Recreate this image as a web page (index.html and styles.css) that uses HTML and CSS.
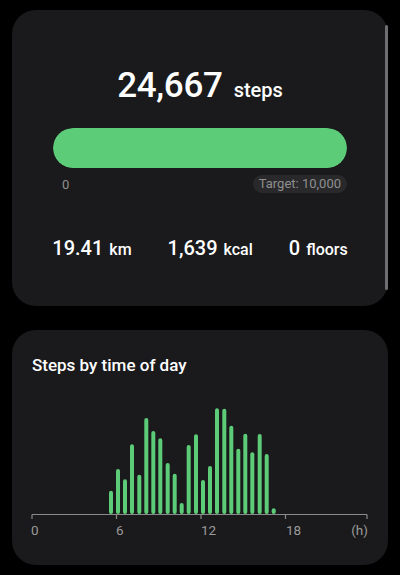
FILE: index.html
```html
<!DOCTYPE html>
<html lang="en">
<head>
<meta charset="utf-8">
<link rel="stylesheet" href="styles.css">
</head>
<body>
<div class="screen">
  <section class="card card-steps">
    <div class="total">
      <span class="total-num">24,667</span>
      <span class="total-unit">steps</span>
    </div>
    <div class="progress"><div class="progress-fill"></div></div>
    <div class="progress-labels">
      <span class="zero">0</span>
      <span class="target">Target: 10,000</span>
    </div>
    <div class="stats">
      <div class="stat"><span class="stat-num">19.41</span><span class="stat-unit">km</span></div>
      <div class="divider"></div>
      <div class="stat"><span class="stat-num">1,639</span><span class="stat-unit">kcal</span></div>
      <div class="divider"></div>
      <div class="stat"><span class="stat-num">0</span><span class="stat-unit">floors</span></div>
    </div>
    <div class="scrollbar"></div>
  </section>

  <section class="card card-chart">
    <h2 class="chart-title">Steps by time of day</h2>
    <svg class="chart" width="376" height="160" viewBox="0 0 376 160">
      <g class="bars" fill="#5dcc78">
        <rect x="97" y="100.7" width="4" height="23.3" rx="2"/>
        <rect x="104" y="79" width="4" height="45" rx="2"/>
        <rect x="111" y="89.3" width="4" height="34.7" rx="2"/>
        <rect x="118" y="54.3" width="4" height="69.7" rx="2"/>
        <rect x="125.3" y="84.7" width="4" height="39.3" rx="2"/>
        <rect x="132.3" y="28" width="4" height="96" rx="2"/>
        <rect x="139.3" y="41" width="4" height="83" rx="2"/>
        <rect x="146.3" y="48.3" width="4" height="75.7" rx="2"/>
        <rect x="153.7" y="73" width="4" height="51" rx="2"/>
        <rect x="160.7" y="83.7" width="4" height="40.3" rx="2"/>
        <rect x="167.7" y="113" width="4" height="11" rx="2"/>
        <rect x="174.7" y="55" width="4" height="69" rx="2"/>
        <rect x="182" y="44.3" width="4" height="79.7" rx="2"/>
        <rect x="189" y="90" width="4" height="34" rx="2"/>
        <rect x="196" y="76" width="4" height="48" rx="2"/>
        <rect x="203" y="18.3" width="4" height="105.7" rx="2"/>
        <rect x="210.3" y="18.7" width="4" height="105.3" rx="2"/>
        <rect x="217.3" y="35.7" width="4" height="88.3" rx="2"/>
        <rect x="224.3" y="58.7" width="4" height="65.3" rx="2"/>
        <rect x="231.3" y="43.7" width="4" height="80.3" rx="2"/>
        <rect x="238.3" y="62.3" width="4" height="61.7" rx="2"/>
        <rect x="245.7" y="44" width="4" height="80" rx="2"/>
        <rect x="252.7" y="64" width="4" height="60" rx="2"/>
        <rect x="259.7" y="118.3" width="4" height="5.7" rx="2"/>
      </g>
      <g class="axis" stroke="#8a8a8a" stroke-width="1.2" fill="none">
        <line x1="20" y1="124.5" x2="355" y2="124.5"/>
        <line x1="20" y1="124.5" x2="20" y2="129"/>
        <line x1="104.5" y1="124.5" x2="104.5" y2="129"/>
        <line x1="189" y1="124.5" x2="189" y2="129"/>
        <line x1="273.5" y1="124.5" x2="273.5" y2="129"/>
        <line x1="355" y1="124.5" x2="355" y2="129"/>
      </g>
      <g class="ticks">
        <text x="19" y="145">0</text>
        <text x="104" y="145">6</text>
        <text x="189" y="145">12</text>
        <text x="274" y="145">18</text>
        <text x="356" y="145" text-anchor="end">(h)</text>
      </g>
    </svg>
  </section>
</div>
</body>
</html>
```

FILE: styles.css
```css
* { box-sizing: border-box; }
html, body {
  margin: 0;
  padding: 0;
  background: #000;
}
body {
  font-family: Roboto, "Noto Sans", sans-serif;
  color: #fff;
}
.screen {
  width: 400px;
  height: 575px;
  padding: 10px 12px;
  display: flex;
  flex-direction: column;
  gap: 24px;
  overflow: hidden;
}
.card {
  background: #1a1a1c;
  border-radius: 24px;
  position: relative;
}
.card-steps {
  height: 296px;
  padding: 54px 41px 0;
}
.total {
  display: flex;
  justify-content: center;
  align-items: baseline;
  gap: 11px;
  height: 44px;
}
.total-num {
  font-size: 35px;
  line-height: 44px;
  font-weight: 500;
  letter-spacing: -0.3px;
}
.total-unit {
  font-size: 20px;
  line-height: 24px;
  font-weight: 500;
}
.progress {
  margin-top: 20px;
  height: 40px;
  border-radius: 20px;
  background: #2c2c2e;
  overflow: hidden;
}
.progress-fill {
  width: 100%;
  height: 100%;
  background: #5dcc78;
  border-radius: 20px;
}
.progress-labels {
  margin-top: 7px;
  display: flex;
  justify-content: space-between;
  align-items: center;
  height: 18px;
  font-size: 13px;
  color: #8f8f8f;
}
.zero {
  padding-left: 9px;
}
.target {
  background: #29292b;
  border-radius: 9px;
  padding: 0 6px;
  line-height: 18px;
}
.stats {
  margin-top: 43px;
  display: flex;
  justify-content: center;
  align-items: center;
  gap: 18px;
  height: 24px;
}
.stat {
  display: flex;
  align-items: baseline;
  gap: 6px;
}
.stat-num {
  font-size: 20px;
  line-height: 24px;
  font-weight: 500;
}
.stat-unit {
  font-size: 16px;
  line-height: 20px;
  font-weight: 500;
}
.divider {
  width: 1px;
  height: 16px;
  background: #48484a;
}
.scrollbar {
  position: absolute;
  right: 0;
  top: 15px;
  width: 3px;
  height: 265px;
  border-radius: 2px;
  background: #6e6e70;
}
.card-chart {
  height: 235px;
  padding: 25px 20px 0;
}
.chart-title {
  margin: 0;
  font-size: 17px;
  line-height: 20px;
  font-weight: 500;
}
.chart {
  display: block;
  position: absolute;
  left: 0;
  top: 60px;
}
.ticks text {
  font-family: Roboto, "Noto Sans", sans-serif;
  font-size: 13.5px;
  fill: #9a9a9a;
}
```
